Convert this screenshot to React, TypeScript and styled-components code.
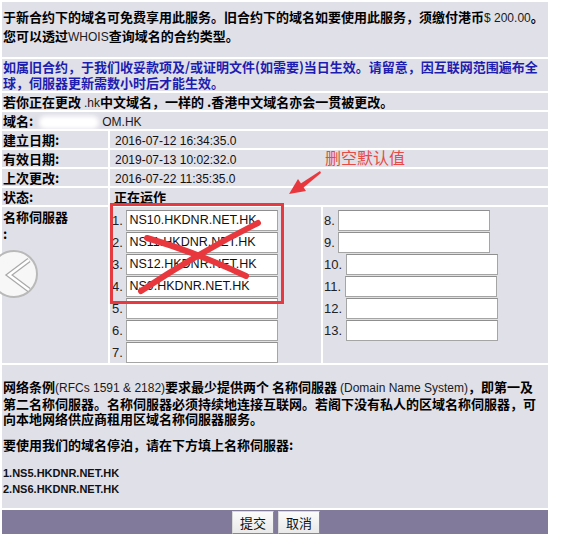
import React from "react";
import styled, { createGlobalStyle } from "styled-components";

const GlobalStyle = createGlobalStyle`
  body {
    margin: 0;
    background: #ffffff;
  }
`;

const CJK = `"Noto Sans CJK SC", "Liberation Sans", sans-serif`;
const LATIN = `"Liberation Sans", "Noto Sans CJK SC", sans-serif`;
const CELL_BG = "#e0e0e9";

const Frame = styled.div`
  position: relative;
  width: 569px;
  height: 549px;
  padding: 2px 0 0 2px;
  box-sizing: border-box;
  overflow: hidden;
`;

const Page = styled.div`
  width: 546px;
  display: flex;
  flex-direction: column;
  gap: 2px;
  font-family: ${CJK};
  font-size: 13px;
  font-weight: 700;
  color: #000;
`;

const Block = styled.div<{ $blue?: boolean; $h?: number; $pt?: number }>`
  background: ${CELL_BG};
  height: ${(p) => p.$h ?? 17}px;
  padding: ${(p) => p.$pt ?? 0}px 0 0 1px;
  box-sizing: border-box;
  line-height: ${(p) => (p.$blue ? 16 : 18)}px;
  color: ${(p) => (p.$blue ? "#1d1db0" : "#000")};
  white-space: nowrap;
`;

const Latin = styled.span<{ $bold?: boolean }>`
  font-family: ${LATIN};
  font-weight: ${(p) => (p.$bold ? 700 : 400)};
  font-size: 12px;
  color: #1a1a1a;
`;

const Row = styled.div<{ $cols: string; $h?: number }>`
  display: grid;
  grid-template-columns: ${(p) => p.$cols};
  gap: 2px;
  height: ${(p) => p.$h ?? 17}px;
`;

const Cell = styled.div<{ $pt?: number }>`
  background: ${CELL_BG};
  line-height: 17px;
  padding: ${(p) => p.$pt ?? 0}px 0 0 1px;
  box-sizing: border-box;
  white-space: nowrap;
  overflow: hidden;
`;

const Value = styled.span`
  font-family: ${LATIN};
  font-weight: 400;
  font-size: 12px;
  color: #111;
  padding-left: 4px;
`;

const Redact = styled.span`
  display: inline-block;
  width: 60px;
  height: 13px;
  margin: 0 3px 0 6px;
  vertical-align: middle;
  background: #ffffff;
  border-radius: 8px;
  filter: blur(2px);
`;

const NsList = styled.div<{ $pl: number }>`
  background: ${CELL_BG};
  padding: 2px 0 0 ${(p) => p.$pl}px;
  box-sizing: border-box;
  display: flex;
  flex-direction: column;
`;

const NsLine = styled.div`
  height: 22px;
  display: flex;
  align-items: center;
  font-family: ${LATIN};
  font-weight: 400;
  font-size: 13px;
  color: #222;
  white-space: pre;
`;

const NsInput = styled.input`
  width: 152px;
  height: 21px;
  box-sizing: border-box;
  margin: 0;
  border: 1px solid #a5a5a5;
  border-top-color: #8f8f8f;
  background: #fff;
  padding: 0 2px;
  font-family: ${LATIN};
  font-size: 12.5px;
  color: #111;
  outline: none;
`;

const Info = styled.div`
  background: ${CELL_BG};
  height: 143px;
  box-sizing: border-box;
  padding: 14px 0 0 1px;
  line-height: 15px;
  white-space: nowrap;
`;

const Para = styled.p<{ $mt?: number }>`
  margin: ${(p) => p.$mt ?? 0}px 0 0;
`;

const Servers = styled.div`
  margin-top: 13px;
  font-family: ${LATIN};
  font-weight: 700;
  font-size: 11px;
  line-height: 16px;
  color: #111;
`;

const ButtonBar = styled.div`
  background: #827a9b;
  height: 24px;
  display: flex;
  justify-content: center;
  align-items: center;
  gap: 4px;
  padding-left: 2px;
`;

const Button = styled.button`
  height: 23px;
  width: 42px;
  padding: 0;
  border: 1px solid #8a8a8a;
  border-top-color: #d8d8d8;
  border-left-color: #d8d8d8;
  background: linear-gradient(#fbfbfb, #e9e9e9);
  font-family: ${CJK};
  font-size: 13px;
  color: #111;
`;

const RedBox = styled.div`
  position: absolute;
  left: 110px;
  top: 203px;
  width: 174px;
  height: 101px;
  box-sizing: border-box;
  border: 3px solid #e53a3f;
  pointer-events: none;
`;

const Overlay = styled.svg`
  position: absolute;
  left: 0;
  top: 0;
  pointer-events: none;
`;

const Note = styled.div`
  position: absolute;
  left: 325px;
  top: 147px;
  font-family: ${CJK};
  font-size: 16px;
  font-weight: 400;
  color: #e64a44;
  line-height: 20px;
`;

const leftNs = [
  "NS10.HKDNR.NET.HK",
  "NS11.HKDNR.NET.HK",
  "NS12.HKDNR.NET.HK",
  "NS9.HKDNR.NET.HK",
  "",
  "",
  "",
];

const dates: [string, string][] = [
  ["建立日期:", "2016-07-12 16:34:35.0"],
  ["有效日期:", "2019-07-13 10:02:32.0"],
  ["上次更改:", "2016-07-22 11:35:35.0"],
];

export default function App() {
  return (
    <>
      <GlobalStyle />
      <Frame>
        <Page>
          <Block $h={55} $pt={6}>
            于新合约下的域名可免费享用此服务。旧合约下的域名如要使用此服务，须缴付港币<Latin>$ 200.00</Latin>。
            <br />
            您可以透过<Latin>WHOIS</Latin>查询域名的合约类型。
          </Block>
          <Block $blue $h={32}>
            如属旧合约，于我们收妥款项及/或证明文件(如需要)当日生效。请留意，因互联网范围遍布全
            <br />
            球，伺服器更新需数小时后才能生效。
          </Block>
          <Block>
            若你正在更改 <Latin>.hk</Latin>中文域名，一样的 .香港中文域名亦会一贯被更改。
          </Block>
          <Row $cols="1fr">
            <Cell>
              域名:<Redact />
              <Latin>OM.HK</Latin>
            </Cell>
          </Row>
          {dates.map(([label, value]) => (
            <Row key={label} $cols="106px 1fr">
              <Cell>{label}</Cell>
              <Cell>
                <Value>{value}</Value>
              </Cell>
            </Row>
          ))}
          <Row $cols="106px 1fr">
            <Cell>状态:</Cell>
            <Cell>&nbsp;正在运作</Cell>
          </Row>
          <Row $cols="106px 211px 1fr" $h={156}>
            <Cell $pt={1}>
              名称伺服器
              <br />:
            </Cell>
            <NsList $pl={2}>
              {leftNs.map((v, i) => (
                <NsLine key={i}>
                  {`${i + 1}. `}
                  <NsInput defaultValue={v} readOnly />
                </NsLine>
              ))}
            </NsList>
            <NsList $pl={1}>
              {[8, 9, 10, 11, 12, 13].map((n) => (
                <NsLine key={n}>
                  {`${n}. `}
                  <NsInput readOnly />
                </NsLine>
              ))}
            </NsList>
          </Row>
          <Info>
            <Para>
              网络条例<Latin>(RFCs 1591 &amp; 2182)</Latin>要求最少提供两个 名称伺服器 <Latin>(Domain Name System)</Latin>，即第一及
              <br />
              第二名称伺服器。名称伺服器必须持续地连接互联网。若阁下没有私人的区域名称伺服器，可
              <br />
              向本地网络供应商租用区域名称伺服器服务。
            </Para>
            <Para $mt={11}>要使用我们的域名停泊，请在下方填上名称伺服器:</Para>
            <Servers>
              1.NS5.HKDNR.NET.HK
              <br />
              2.NS6.HKDNR.NET.HK
            </Servers>
          </Info>
          <ButtonBar>
            <Button>提交</Button>
            <Button>取消</Button>
          </ButtonBar>
        </Page>

        <RedBox />
        <Note>删空默认值</Note>
        <Overlay width="569" height="549" viewBox="0 0 569 549">
          {/* red cross over default values */}
          <path
            d="M147 238 Q195 252 246 276"
            stroke="#e8383d"
            strokeWidth="6"
            strokeLinecap="round"
            fill="none"
          />
          <path
            d="M141 291 Q200 252 258 223"
            stroke="#e8383d"
            strokeWidth="6"
            strokeLinecap="round"
            fill="none"
          />
          {/* arrow */}
          <polygon points="320,171 321,173 303,188 300,184" fill="#e8383d" />
          <polygon points="289,194 298,179 306,191" fill="#e8383d" />
          {/* back button circle */}
          <circle cx="14" cy="274" r="23" fill="#f7f7f7" stroke="#b9b9b9" strokeWidth="2" />
          <path
            d="M29 260 L9 275 L29 290"
            stroke="#a9a9a9"
            strokeWidth="5"
            strokeLinejoin="miter"
            strokeLinecap="butt"
            fill="none"
          />
          <path
            d="M29 260 L9 275 L29 290"
            stroke="#ffffff"
            strokeWidth="2.5"
            strokeLinejoin="miter"
            fill="none"
          />
        </Overlay>
      </Frame>
    </>
  );
}
